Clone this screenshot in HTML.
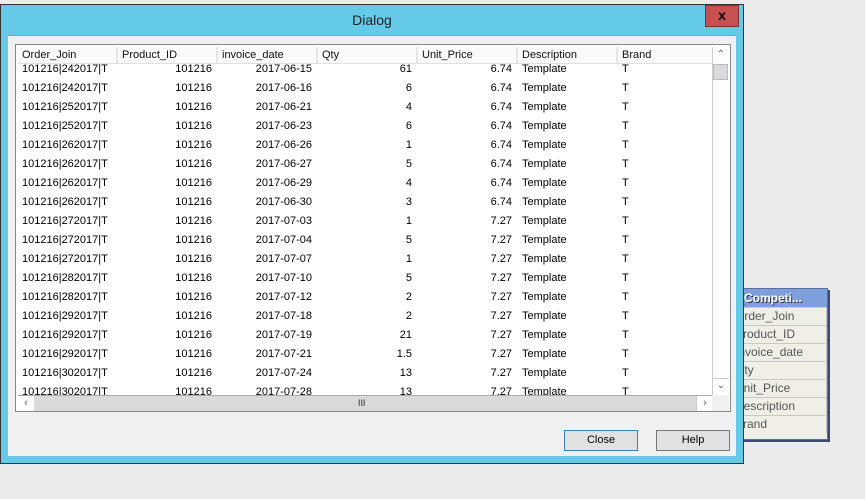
<!DOCTYPE html>
<html><head><style>
body{margin:0;width:865px;height:499px;background:#ebebeb;position:relative;overflow:hidden;font-family:"Liberation Sans",sans-serif;font-size:11px;}
.side{position:absolute;left:729px;top:288px;width:97px;height:150px;background:#efefe7;border:1px solid #5a6e9e;box-shadow:2px 2px 0 #3c4a78;}
.side .h{height:18px;background:#7e9fdc;color:#fff;font-weight:bold;font-size:12px;line-height:18px;padding-left:4px;white-space:nowrap;overflow:hidden;border-bottom:1px solid #c8c8c8;text-shadow:1px 1px 0 #334}
.side .r{height:17px;border-bottom:1px solid #c8c8c8;line-height:17px;color:#555;font-size:12px;padding-left:5px;white-space:nowrap;overflow:hidden;border-right:1px solid #c8c8c8}
.win{position:absolute;left:0;top:4px;width:742px;height:458px;background:#65c9e8;border:1px solid #333;z-index:2}
.title{position:absolute;left:0;top:0;width:742px;height:30px;text-align:center;line-height:30px;font-size:14px;color:#222}
.x{position:absolute;left:704px;top:0;width:32px;height:20px;background:#c75050;border:1px solid #7a3030;color:#000;font-weight:bold;text-align:center;line-height:18px;font-size:14px}
.client{position:absolute;left:7px;top:30px;width:728px;height:420px;background:#f0f0f0;border-top:1px solid #999}
.list{position:absolute;left:7px;top:8px;width:714px;height:366px;border:1px solid #888;background:#fff;overflow:hidden}
.hd{position:absolute;left:2px;top:2px;height:16px;width:694px;background:#fafafa;border-bottom:1px solid #e0e0e0}
.hd div{position:absolute;top:0;height:16px;line-height:16px;padding-left:4px;border-right:2px solid #e5e5e5;box-sizing:border-box;color:#111}
.row{position:absolute;left:2px;height:19px;width:694px;line-height:19px;color:#000}
.row span{position:absolute;top:0}
.vs{position:absolute;left:696px;top:2px;width:16px;height:348px;background:#fff;border-left:1px solid #ccc}
.hs{position:absolute;left:2px;top:350px;width:694px;height:15px;background:#dadada;border-top:1px solid #aaa}
.btn{position:absolute;top:394px;width:72px;height:19px;background:#e1e1e1;border:1px solid #777;text-align:center;line-height:19px;font-size:11px}
</style></head><body>
<div class="side"><div class="h">/_Competi...</div>
<div class="r">Order_Join</div><div class="r">Product_ID</div><div class="r">Invoice_date</div><div class="r">Qty</div><div class="r">Unit_Price</div><div class="r">Description</div><div class="r" style="border-bottom:none">Brand</div></div>
<div class="win">
<div class="title">Dialog</div>
<div class="x">x</div>
<div class="client">
<div class="list">
<div class="hd">
<div style="left:0;width:100px">Order_Join</div><div style="left:100px;width:100px">Product_ID</div><div style="left:200px;width:100px">invoice_date</div><div style="left:300px;width:100px">Qty</div><div style="left:400px;width:100px">Unit_Price</div><div style="left:500px;width:100px">Description</div><div style="left:600px;width:95px;border:none">Brand</div>
</div>
<div id="rows"></div>
<div class="vs"><div style="height:15px;text-align:center;color:#666;font-size:10px;line-height:15px">&#8963;</div><div style="position:absolute;left:0;top:17px;width:15px;height:16px;background:#dadada;border:1px solid #bbb;box-sizing:border-box"></div><div style="position:absolute;bottom:0;width:16px;height:16px;text-align:center;color:#666;font-size:10px;line-height:14px;border-top:1px solid #ccc">&#8964;</div></div>
<div class="hs"><div style="position:absolute;left:0;top:0;width:16px;height:15px;background:#fff;color:#666;text-align:center;line-height:15px">&lsaquo;</div><div style="position:absolute;left:340px;top:0;color:#666;font-weight:bold;line-height:15px;font-size:9px">III</div><div style="position:absolute;left:678px;top:0;width:16px;height:15px;background:#fff;color:#666;text-align:center;line-height:15px;border-left:1px solid #ccc">&rsaquo;</div></div>
<div style="position:absolute;left:696px;top:350px;width:17px;height:16px;background:#f0f0f0"></div>
</div>
<div class="btn" style="left:556px;border-color:#3c7fb1">Close</div>
<div class="btn" style="left:648px">Help</div>
</div></div>
<script>
var d=[["242017","2017-06-15","61","6.74"],["242017","2017-06-16","6","6.74"],["252017","2017-06-21","4","6.74"],["252017","2017-06-23","6","6.74"],["262017","2017-06-26","1","6.74"],["262017","2017-06-27","5","6.74"],["262017","2017-06-29","4","6.74"],["262017","2017-06-30","3","6.74"],["272017","2017-07-03","1","7.27"],["272017","2017-07-04","5","7.27"],["272017","2017-07-07","1","7.27"],["282017","2017-07-10","5","7.27"],["282017","2017-07-12","2","7.27"],["292017","2017-07-18","2","7.27"],["292017","2017-07-19","21","7.27"],["292017","2017-07-21","1.5","7.27"],["302017","2017-07-24","13","7.27"],["302017","2017-07-28","13","7.27"]];
var h="";d.forEach(function(r,i){h+='<div class="row" style="top:'+(15+i*19)+'px"><span style="left:4px">101216|'+r[0]+'|T</span><span style="right:500px">101216</span><span style="right:400px">'+r[1]+'</span><span style="right:300px">'+r[2]+'</span><span style="right:200px">'+r[3]+'</span><span style="left:504px">Template</span><span style="left:604px">T</span></div>';});
document.getElementById("rows").innerHTML=h;
</script>
</body></html>
